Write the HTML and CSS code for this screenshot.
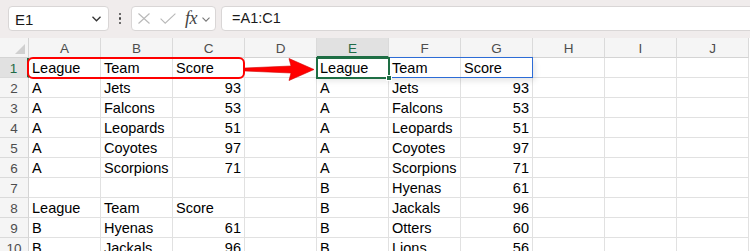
FILE: index.html
```html
<!DOCTYPE html>
<html>
<head>
<meta charset="utf-8">
<link rel="stylesheet" href="styles.css">
</head>
<body>
<div class="topbar">
  <div class="namebox">
    <span class="nb-text">E1</span>
    <svg class="chev" width="9" height="6" viewBox="0 0 9 6"><path d="M0.5 0.8 L4.5 4.8 L8.5 0.8" fill="none" stroke="#333" stroke-width="1.3"/></svg>
  </div>
  <div class="dots"><span></span><span></span><span></span></div>
  <div class="fxbox">
    <svg class="ico" width="12" height="11" viewBox="0 0 12 11"><path d="M0.5 0.5 L11.5 10.5 M11.5 0.5 L0.5 10.5" stroke="#b8b8b8" stroke-width="1.1" fill="none"/></svg>
    <svg class="ico ok" width="16" height="11" viewBox="0 0 16 11"><path d="M0.6 5.6 L5.2 10.2 L15.4 0.6" stroke="#b8b8b8" stroke-width="1.1" fill="none"/></svg>
    <span class="fx">fx</span>
    <svg class="chev2" width="8" height="5" viewBox="0 0 8 5"><path d="M0.5 0.7 L4 4.2 L7.5 0.7" fill="none" stroke="#777" stroke-width="1.1"/></svg>
  </div>
  <div class="formula">=A1:C1</div>
</div>
<div class="sheetwrap">
  <div class="sheet">
    <div class="corner"><span class="tri"></span></div>
    <div class="ch">A</div><div class="ch">B</div><div class="ch">C</div><div class="ch">D</div><div class="ch sel">E</div><div class="ch">F</div><div class="ch">G</div><div class="ch">H</div><div class="ch">I</div><div class="ch">J</div>

    <div class="rh sel">1</div>
    <div class="c">League</div><div class="c">Team</div><div class="c">Score</div><div class="c"></div>
    <div class="c">League</div><div class="c">Team</div><div class="c">Score</div><div class="c"></div><div class="c"></div><div class="c"></div>

    <div class="rh">2</div>
    <div class="c">A</div><div class="c">Jets</div><div class="c n">93</div><div class="c"></div>
    <div class="c">A</div><div class="c">Jets</div><div class="c n">93</div><div class="c"></div><div class="c"></div><div class="c"></div>

    <div class="rh">3</div>
    <div class="c">A</div><div class="c">Falcons</div><div class="c n">53</div><div class="c"></div>
    <div class="c">A</div><div class="c">Falcons</div><div class="c n">53</div><div class="c"></div><div class="c"></div><div class="c"></div>

    <div class="rh">4</div>
    <div class="c">A</div><div class="c">Leopards</div><div class="c n">51</div><div class="c"></div>
    <div class="c">A</div><div class="c">Leopards</div><div class="c n">51</div><div class="c"></div><div class="c"></div><div class="c"></div>

    <div class="rh">5</div>
    <div class="c">A</div><div class="c">Coyotes</div><div class="c n">97</div><div class="c"></div>
    <div class="c">A</div><div class="c">Coyotes</div><div class="c n">97</div><div class="c"></div><div class="c"></div><div class="c"></div>

    <div class="rh">6</div>
    <div class="c">A</div><div class="c">Scorpions</div><div class="c n">71</div><div class="c"></div>
    <div class="c">A</div><div class="c">Scorpions</div><div class="c n">71</div><div class="c"></div><div class="c"></div><div class="c"></div>

    <div class="rh">7</div>
    <div class="c"></div><div class="c"></div><div class="c"></div><div class="c"></div>
    <div class="c">B</div><div class="c">Hyenas</div><div class="c n">61</div><div class="c"></div><div class="c"></div><div class="c"></div>

    <div class="rh">8</div>
    <div class="c">League</div><div class="c">Team</div><div class="c">Score</div><div class="c"></div>
    <div class="c">B</div><div class="c">Jackals</div><div class="c n">96</div><div class="c"></div><div class="c"></div><div class="c"></div>

    <div class="rh">9</div>
    <div class="c">B</div><div class="c">Hyenas</div><div class="c n">61</div><div class="c"></div>
    <div class="c">B</div><div class="c">Otters</div><div class="c n">60</div><div class="c"></div><div class="c"></div><div class="c"></div>

    <div class="rh">10</div>
    <div class="c">B</div><div class="c">Jackals</div><div class="c n">96</div><div class="c"></div>
    <div class="c">B</div><div class="c">Lions</div><div class="c n">56</div><div class="c"></div><div class="c"></div><div class="c"></div>
  </div>

  <div class="spill"></div>
  <div class="active"></div>
  <div class="handle"></div>
  <div class="callout"></div>
  <svg class="arrow" width="750" height="213" viewBox="0 0 750 213"><polygon points="245,30 291,28 289,20.5 314,31.5 289,42.5 291,35 245,33" fill="#ff0000" stroke="#d40000" stroke-width="0.6" stroke-linejoin="round"/></svg>
</div>
</body>
</html>
```
FILE: styles.css
```css
html, body {
  margin: 0;
  padding: 0;
  background: #ffffff;
  overflow: hidden;
}
body {
  width: 750px;
  height: 251px;
  font-family: "Liberation Sans", Arial, sans-serif;
}
.topbar {
  height: 38px;
  background: #f0ecec;
  display: flex;
  align-items: flex-start;
  padding: 6px 0 0 8px;
  box-sizing: border-box;
}
.namebox {
  width: 101px;
  height: 25px;
  box-sizing: border-box;
  background: #fff;
  border: 1px solid #d9d6d6;
  border-radius: 4px;
  display: flex;
  align-items: center;
  justify-content: space-between;
  padding: 0 7px 0 6px;
}
.nb-text {
  font-size: 15px;
  color: #1a1a1a;
  padding-top: 1px;
}
.chev { margin-top: 1px; }
.dots {
  width: 22px;
  height: 25px;
  display: flex;
  flex-direction: column;
  align-items: center;
  justify-content: center;
  gap: 2px;
}
.dots span {
  width: 2.5px;
  height: 2.5px;
  border-radius: 50%;
  background: #444;
}
.fxbox {
  width: 85px;
  height: 25px;
  box-sizing: border-box;
  background: #fff;
  border: 1px solid #d9d6d6;
  border-radius: 4px;
  display: flex;
  align-items: center;
  padding-left: 6px;
}
.ico.ok { margin-left: 10px; }
.fx {
  font-family: "Liberation Serif", "Times New Roman", serif;
  font-style: italic;
  font-size: 18px;
  color: #444;
  margin-left: 9px;
  letter-spacing: -0.5px;
  line-height: 1;
  padding-bottom: 2px;
}
.chev2 { margin-left: 5px; margin-top: 1px; }
.formula {
  flex: 1;
  margin-left: 5px;
  margin-right: -10px;
  height: 25px;
  box-sizing: border-box;
  background: #fff;
  border: 1px solid #d9d6d6;
  border-radius: 4px;
  font-size: 14.5px;
  color: #1a1a1a;
  line-height: 23px;
  padding-left: 10px;
}
.sheetwrap {
  position: relative;
}
.sheet {
  display: grid;
  grid-template-columns: 29px repeat(10, 72px);
  grid-auto-rows: 20px;
}
.sheet > div {
  box-sizing: border-box;
  border-right: 1px solid #e1e1e1;
  border-bottom: 1px solid #e1e1e1;
  overflow: hidden;
  white-space: nowrap;
}
.corner {
  background: #f5f5f5;
  position: relative;
  border-right-color: #d4d4d4 !important;
  border-bottom-color: #d4d4d4 !important;
}
.tri {
  position: absolute;
  right: 3px;
  bottom: 3px;
  width: 0;
  height: 0;
  border-left: 10px solid transparent;
  border-bottom: 10px solid #d0d0d0;
}
.ch {
  background: #f5f5f5;
  text-align: center;
  font-size: 13.5px;
  color: #4d4d4d;
  line-height: 22px;
  border-bottom-color: #d4d4d4 !important;
  border-right-color: #dadada !important;
}
.ch.sel {
  background: #e1e1e1;
  color: #1f6b46;
  border-bottom: 2px solid #1e6e44 !important;
}
.rh {
  background: #f5f5f5;
  text-align: center;
  font-size: 13.5px;
  color: #4d4d4d;
  line-height: 21px;
  border-right-color: #d4d4d4 !important;
  border-bottom-color: #dadada !important;
}
.rh.sel {
  background: #e1e1e1;
  color: #1f6b46;
  border-right: 2px solid #1e6e44 !important;
}
.c {
  font-size: 14.5px;
  color: #000;
  line-height: 21px;
  padding: 0 3px 0 3px;
}
.c.n { text-align: right; }
.spill {
  position: absolute;
  left: 316px;
  top: 19px;
  width: 217px;
  height: 21px;
  box-sizing: border-box;
  border: 1.5px solid #2d6cd6;
  box-shadow: 2px 3px 6px rgba(0, 0, 0, 0.10);
}
.active {
  position: absolute;
  left: 316px;
  top: 19px;
  width: 74px;
  height: 22px;
  box-sizing: border-box;
  border: 2px solid #1e6e44;
}
.handle {
  position: absolute;
  left: 386px;
  top: 37px;
  width: 6px;
  height: 6px;
  box-sizing: border-box;
  background: #1e6e44;
  border: 1px solid #fff;
}
.callout {
  position: absolute;
  left: 27px;
  top: 19px;
  width: 218px;
  height: 22px;
  box-sizing: border-box;
  border: 2px solid #f00;
  border-radius: 6px;
}
.arrow {
  position: absolute;
  left: 0;
  top: 0;
  pointer-events: none;
}
```
